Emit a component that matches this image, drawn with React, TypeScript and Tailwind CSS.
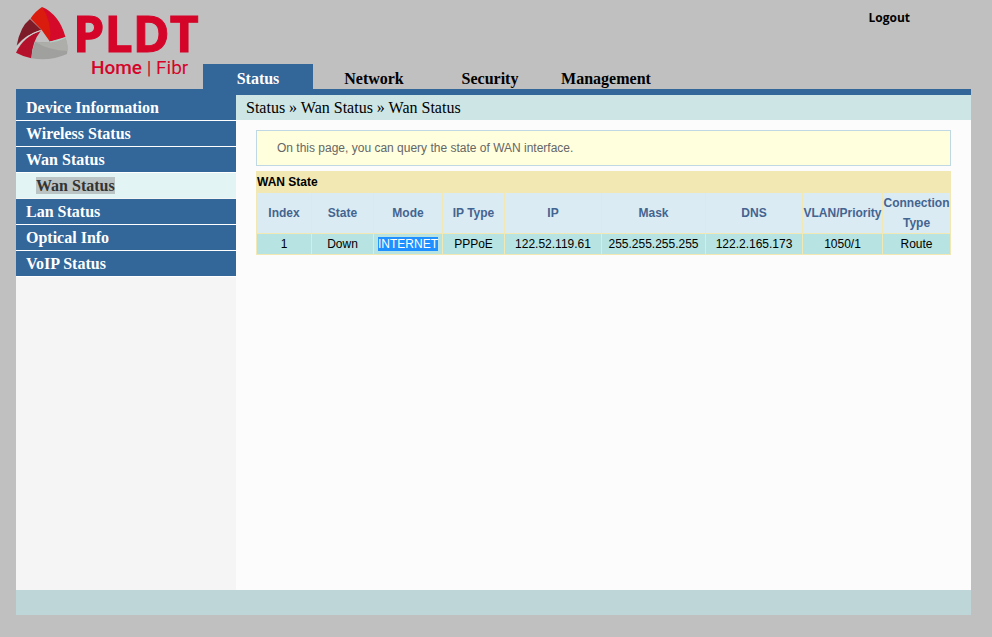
const tabs = ['Status', 'Network', 'Security', 'Management'];

const menu = [
  { label: 'Device Information' },
  { label: 'Wireless Status' },
  { label: 'Wan Status', children: ['Wan Status'] },
  { label: 'Lan Status' },
  { label: 'Optical Info' },
  { label: 'VoIP Status' },
];

const columns = [
  { title: 'Index', width: 'w-[55px]' },
  { title: 'State', width: 'w-[62px]' },
  { title: 'Mode', width: 'w-[69px]' },
  { title: 'IP Type', width: 'w-[62px]' },
  { title: 'IP', width: 'w-[97px]' },
  { title: 'Mask', width: '' },
  { title: 'DNS', width: 'w-[97px]' },
  { title: 'VLAN/Priority', width: 'w-[80px]' },
  { title: 'Connection Type', width: 'w-[68px]' },
];

const rows = [
  ['1', 'Down', 'INTERNET', 'PPPoE', '122.52.119.61', '255.255.255.255', '122.2.165.173', '1050/1', 'Route'],
];

function Logo() {
  return (
    <svg width="187" height="84" viewBox="0 0 187 84" role="img" aria-label="PLDT Home Fibr" className="shrink-0">
      <path d="M26 7 Q34 10 40.700 18.500 Q46 25 49.500 37 L34 41.500 L30 25Z" fill="#d50a2a" />
      <path d="M26 7 Q36 21 34 41.700 L25.700 30 L14.500 18.500 Q19 11.500 26 7Z" fill="#da1c0e" />
      <path d="M14 19 L25.300 30 Q10 34 0.700 45.500 Q2 37 6 29 Q9 23 14 19Z" fill="#7d1c28" />
      <path d="M24.700 31 Q16 42 15.300 58.300 Q7 56.500 0 52.700 Q8 36 24.700 31Z" fill="#b5112c" />
      <path d="M0.500 48.500 Q9 35 24.500 30.500" fill="none" stroke="#d5d2d0" strokeWidth="1" />
      <path d="M19 41.700 Q35 43.500 49.500 37.700 Q52.500 46 51 54 Q34 61.500 15.500 58.300 Q16 49 19 41.700Z" fill="#a0a19e" />
      <path d="M19 41.700 Q35 43.500 49.500 37.700 Q52.500 46 51.500 51 Q33 50.500 19 41.700Z" fill="#adaea9" />
      <path d="M34 42 Q43 41 49.500 37.500" fill="none" stroke="#b3d5cb" strokeWidth="1" />
      <text
        x="57"
        y="52"
        fontSize="50"
        stroke="#d5052a"
        strokeWidth="1"
        className="fill-[#d5052a] font-['Open_Sans',sans-serif] font-bold"
      >
        PLDT
      </text>
      <text x="75" y="74" fontSize="19" className="fill-[#d5052a] font-['Roboto',sans-serif]">
        <tspan className="font-medium">Home</tspan> | Fibr
      </text>
    </svg>
  );
}

export default function App() {
  return (
    <div className="flex min-h-screen flex-col bg-[#c0c0c0] pr-[21px] pb-[22px] pl-4 font-['Liberation_Serif',serif] text-base text-black">
      <header className="flex justify-between">
        <div className="flex h-[89px]">
          <Logo />
          <nav className="flex gap-[6px] self-end font-bold" aria-label="Main">
            {tabs.map((tab, i) => (
              <a
                key={tab}
                href="#"
                className={`flex h-[25px] w-[110px] items-center justify-center pt-1 ${i === 0 ? 'bg-[#336699] text-white' : ''}`}
              >
                {tab}
              </a>
            ))}
          </nav>
        </div>
        <a href="#" className="mt-2 mr-[61px] self-start font-['Open_Sans',sans-serif] text-xs leading-5 font-bold">
          Logout
        </a>
      </header>

      <div className="h-[6px] bg-[#336699]" />

      <div className="flex flex-1">
        <aside className="w-[220px] shrink-0 bg-[#f5f5f5] font-bold">
          <ul>
            {menu.map((item) => (
              <li key={item.label}>
                <a href="#" className="block border-b border-white bg-[#336699] pl-[10px] leading-[25px] text-white">
                  {item.label}
                </a>
                {item.children?.map((child) => (
                  <a
                    key={child}
                    href="#"
                    className="flex h-[26px] items-center border-b border-[#f5f5f5] bg-[#e3f4f4] pl-5 text-[#333333]"
                  >
                    <span className="bg-[#bbc4c4] leading-[17px]">{child}</span>
                  </a>
                ))}
              </li>
            ))}
          </ul>
        </aside>

        <main className="min-w-0 flex-1 bg-[#fcfcfc]">
          <div className="bg-[#cde5e5] pl-[10px] leading-[25px]">Status » Wan Status » Wan Status</div>

          <div className="px-5 pt-[10px] font-['Liberation_Sans',sans-serif] text-xs">
            <p className="border border-[#c0d7e4] bg-[#ffffdd] py-[7px] pl-5 leading-5 text-[#666666]">
              On this page, you can query the state of WAN interface.
            </p>

            <table className="mt-[5px] w-full table-fixed border-collapse text-center leading-5">
              <caption className="bg-[#f1e8b3] pt-px pl-px text-left leading-5 font-bold">WAN State</caption>
              <thead>
                <tr>
                  {columns.map((c) => (
                    <th key={c.title} scope="col" className={`border border-[#f1e8b3] bg-[#dbebf3] p-0 text-[#446490] ${c.width}`}>
                      {c.title}
                    </th>
                  ))}
                </tr>
              </thead>
              <tbody>
                {rows.map((row) => (
                  <tr key={row[0]}>
                    {row.map((cell, i) => (
                      <td key={columns[i].title} className="border border-[#f1e8b3] bg-[#b7e3e2] p-0">
                        {i === 2 ? <span className="bg-[#1e90ff] text-white">{cell}</span> : cell}
                      </td>
                    ))}
                  </tr>
                ))}
              </tbody>
            </table>
          </div>
        </main>
      </div>

      <footer className="h-[25px] bg-[#bed6d7]" />
    </div>
  );
}
